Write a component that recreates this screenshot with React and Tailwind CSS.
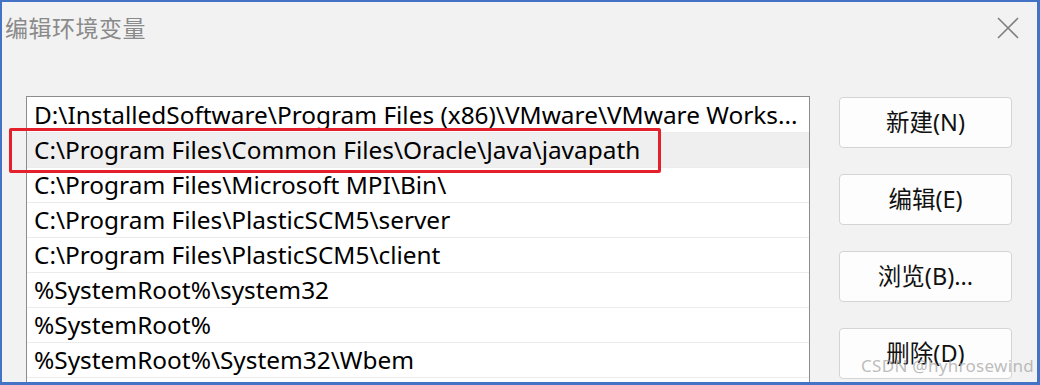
const rows = [
  'D:\\InstalledSoftware\\Program Files (x86)\\VMware\\VMware Works...',
  'C:\\Program Files\\Common Files\\Oracle\\Java\\javapath',
  'C:\\Program Files\\Microsoft MPI\\Bin\\',
  'C:\\Program Files\\PlasticSCM5\\server',
  'C:\\Program Files\\PlasticSCM5\\client',
  '%SystemRoot%\\system32',
  '%SystemRoot%',
  '%SystemRoot%\\System32\\Wbem',
]

const buttons = ['新建(N)', '编辑(E)', '浏览(B)...', '删除(D)']

const font = { fontFamily: '"Noto Sans", "Noto Sans CJK SC", sans-serif' }

export default function App() {
  return (
    <div
      className="relative w-[1040px] h-[385px] overflow-hidden bg-[#f2f2f2] border-t-2 border-l-2 border-r-[3px] border-b-[3px] border-[#4472c4]"
      style={font}
    >
      {/* title bar */}
      <div className="flex items-center justify-between h-[52px] pl-[3px] pr-[18px]">
        <span className="text-[23px] text-[#8a8a8a] tracking-[0.5px]">编辑环境变量</span>
        <svg width="22" height="22" viewBox="0 0 22 22" className="text-[#808080]">
          <path d="M1 1 L21 21 M21 1 L1 21" stroke="currentColor" strokeWidth="1.6" />
        </svg>
      </div>

      <div className="flex mt-[42px] pl-[24px]">
        {/* path list */}
        <div className="w-[784px] h-[300px] bg-white border border-[#8c8c8c] border-b-0 pt-[1px]">
          {rows.map((r, i) => (
            <div
              key={i}
              className={
                'h-[35px] pl-[7px] flex items-center text-[24.4px] text-black whitespace-nowrap border-b border-[#ececec] ' +
                (i === 1 ? 'bg-[#efefef]' : '')
              }
            >
              {r}
            </div>
          ))}
        </div>

        {/* buttons */}
        <div className="flex flex-col gap-[26px] ml-[29px] pt-[1px]">
          {buttons.map((b) => (
            <div
              key={b}
              className="w-[173px] h-[51px] flex items-center justify-center rounded-[4px] bg-[#fdfdfd] border border-[#d4d4d4] text-[23.5px] text-[#111]"
            >
              {b}
            </div>
          ))}
        </div>
      </div>

      {/* highlight frame */}
      <div className="absolute left-[7px] top-[126px] w-[652px] h-[45px] border-[3px] border-[#e3202c] rounded-[2px]" />

      {/* watermark */}
      <div className="absolute right-[3px] bottom-[4px] text-[17px] text-[#a0a0a0]/70 tracking-[0.3px]">
        CSDN @hyhrosewind
      </div>
    </div>
  )
}
